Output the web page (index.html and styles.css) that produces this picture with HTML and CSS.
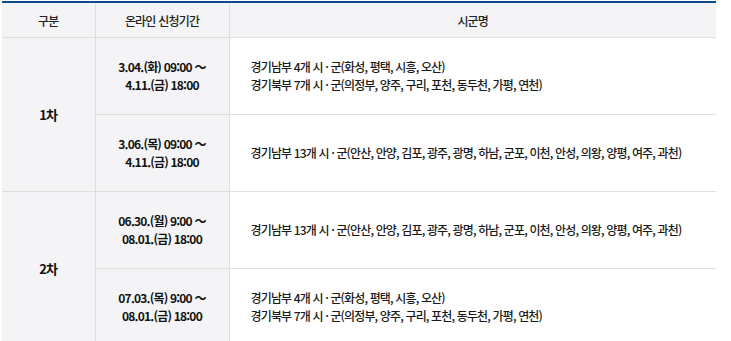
FILE: index.html
```html
<!DOCTYPE html>
<html lang="ko">
<head>
<meta charset="utf-8">
<link rel="stylesheet" href="styles.css">
</head>
<body>
<table class="sched">
  <colgroup>
    <col class="c1">
    <col class="c2">
    <col class="c3">
  </colgroup>
  <thead>
    <tr class="head">
      <th>구분</th>
      <th>온라인 신청기간</th>
      <th>시군명</th>
    </tr>
  </thead>
  <tbody>
    <tr class="row">
      <td class="round" rowspan="2">1차</td>
      <td class="period">3.04.(화) 09:00 ～<br>4.11.(금) 18:00</td>
      <td class="cities">경기남부 4개 시 · 군(화성, 평택, 시흥, 오산)<br>경기북부 7개 시 · 군(의정부, 양주, 구리, 포천, 동두천, 가평, 연천)</td>
    </tr>
    <tr class="row">
      <td class="period">3.06.(목) 09:00 ～<br>4.11.(금) 18:00</td>
      <td class="cities">경기남부 13개 시 · 군(안산, 안양, 김포, 광주, 광명, 하남, 군포, 이천, 안성, 의왕, 양평, 여주, 과천)</td>
    </tr>
    <tr class="row">
      <td class="round" rowspan="2">2차</td>
      <td class="period">06.30.(월) 9:00 ～<br>08.01.(금) 18:00</td>
      <td class="cities">경기남부 13개 시 · 군(안산, 안양, 김포, 광주, 광명, 하남, 군포, 이천, 안성, 의왕, 양평, 여주, 과천)</td>
    </tr>
    <tr class="row">
      <td class="period">07.03.(목) 9:00 ～<br>08.01.(금) 18:00</td>
      <td class="cities">경기남부 4개 시 · 군(화성, 평택, 시흥, 오산)<br>경기북부 7개 시 · 군(의정부, 양주, 구리, 포천, 동두천, 가평, 연천)</td>
    </tr>
  </tbody>
</table>
</body>
</html>
```

FILE: styles.css
```css
html, body {
  overflow: hidden;
}
body {
  margin: 1px 0 0 2px;
  background: #fff;
  font-family: "Noto Sans CJK KR", "Noto Sans", sans-serif;
  font-size: 12px;
  color: #1a1a1a;
}
.sched {
  width: 714px;
  border-collapse: collapse;
  border-top: 2px solid #0d4a8c;
  table-layout: fixed;
  letter-spacing: -0.8px;
}
.c1 { width: 93px; }
.c2 { width: 134px; }
.c3 { width: auto; }
.sched th,
.sched td {
  padding: 0;
  vertical-align: middle;
  border: 1px solid #dedede;
  border-left: 0;
  border-top: 0;
}
.sched th:last-child,
.sched td:last-child {
  border-right: 0;
}
.head th {
  height: 34px;
  background: #f4f4f6;
  font-weight: 500;
  color: #222;
  text-align: center;
}
.row td {
  height: 76px;
  line-height: 18px;
}
.round {
  background: #f4f4f6;
  text-align: center;
  font-weight: 700;
  font-size: 13px;
  color: #111;
}
.period {
  background: #f4f4f6;
  text-align: center;
  font-weight: 700;
  color: #111;
}
.sched .cities {
  padding-left: 21px;
  text-align: left;
  font-weight: 500;
  letter-spacing: -0.85px;
}
```
